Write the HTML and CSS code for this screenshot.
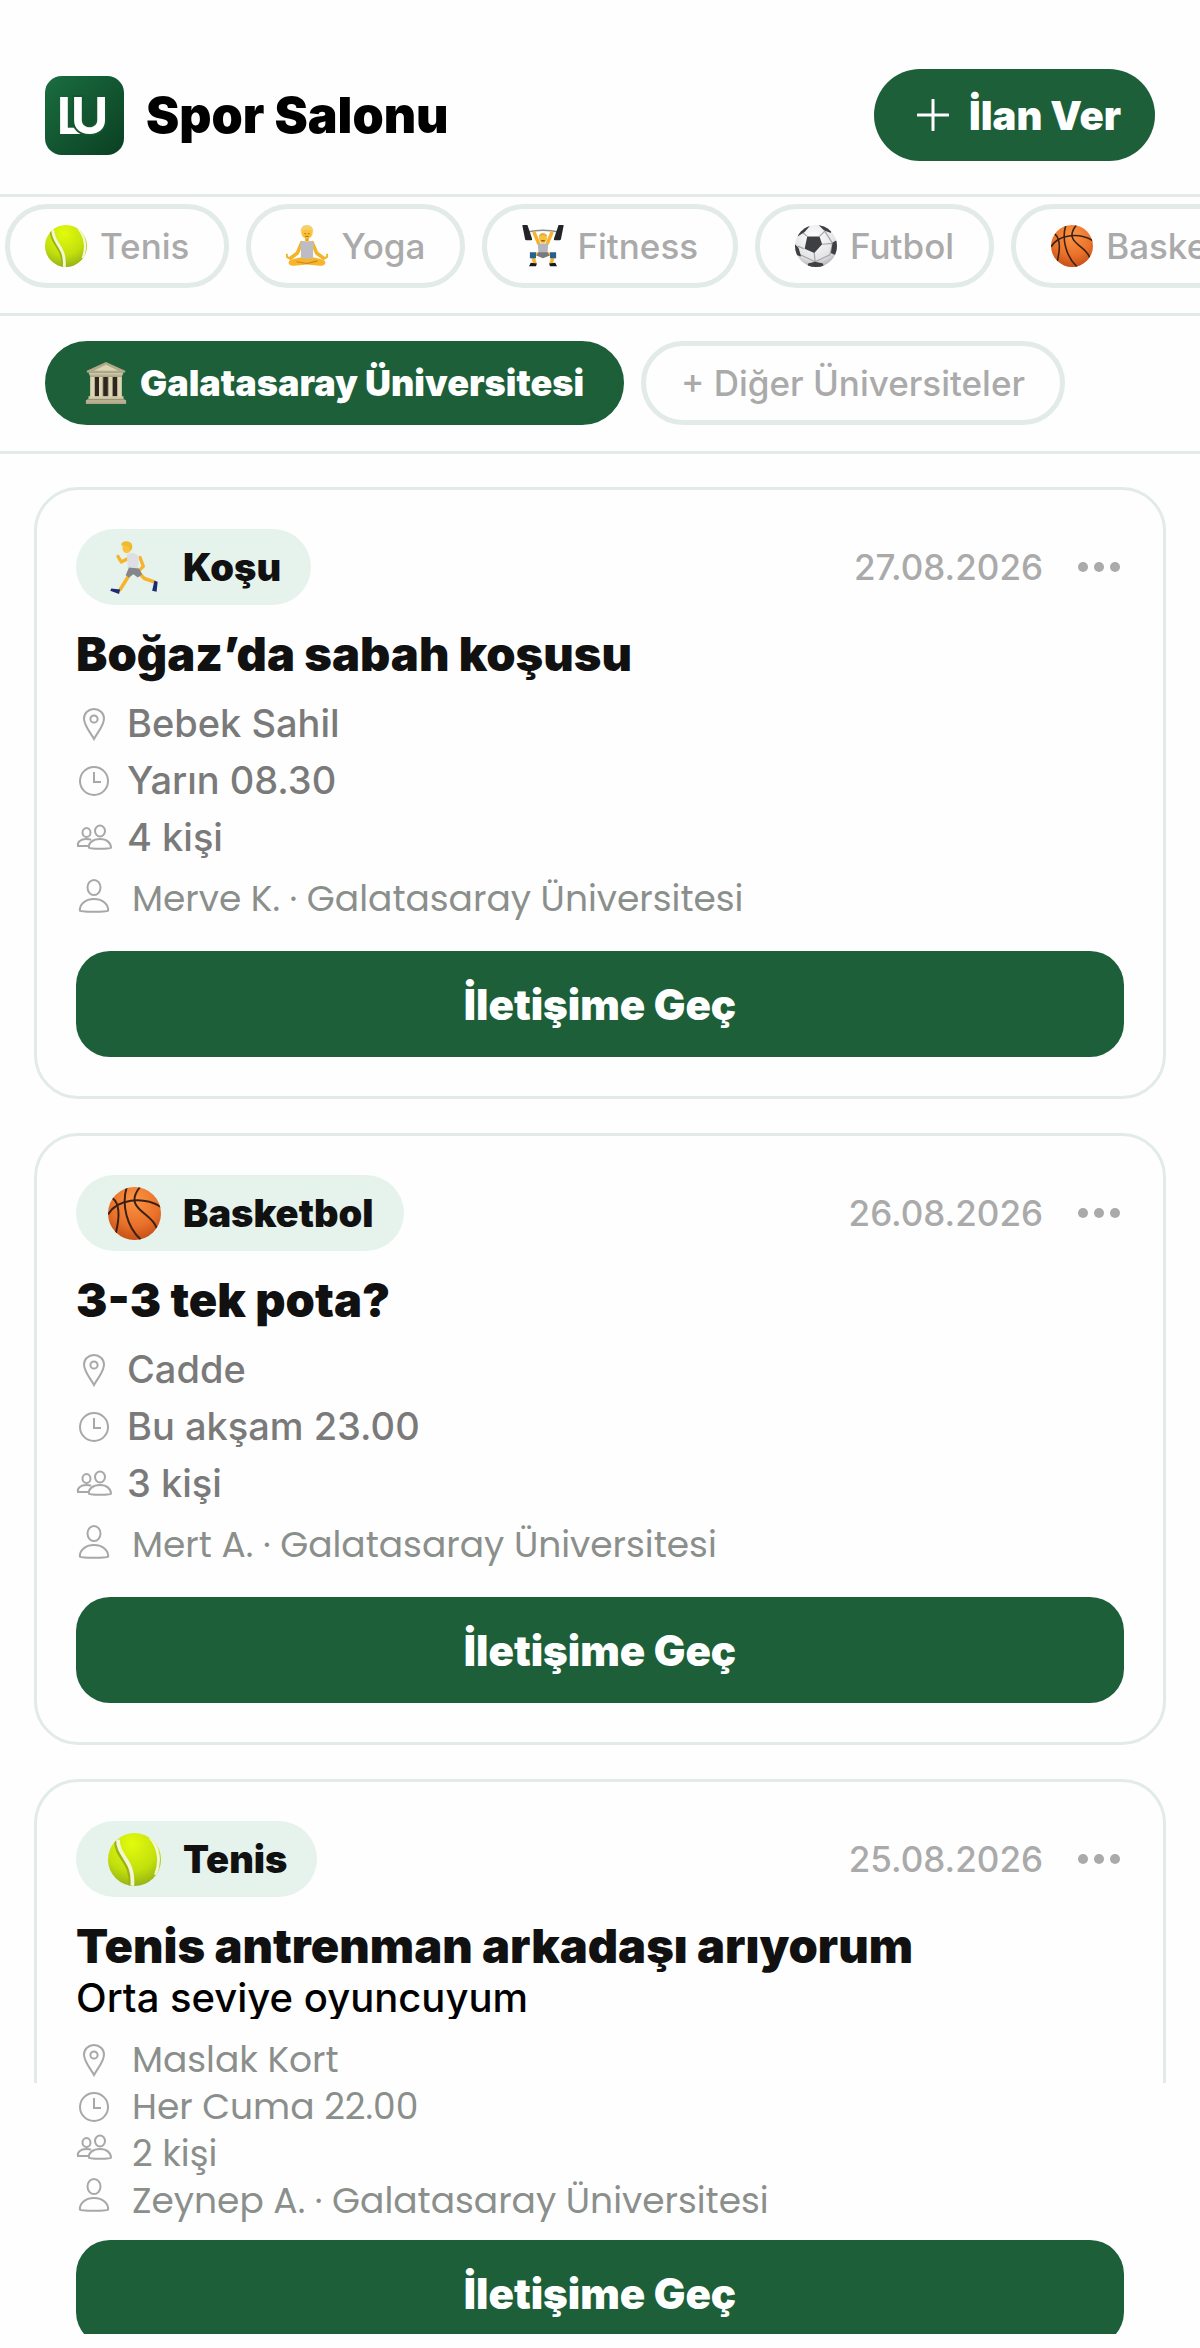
FILE: index.html
```html
<!DOCTYPE html>
<html lang="tr">
<head>
  <meta charset="UTF-8">
  <meta name="viewport" content="width=device-width, initial-scale=1">
  <title>Spor Salonu</title>
  <link rel="stylesheet" href="styles.css">
</head>
<body>

  <!-- shared icons -->
  <svg class="sprite" aria-hidden="true">
    <defs>
      <linearGradient id="logoFill" x1="0" y1="0" x2="1" y2="1">
        <stop offset="0" stop-color="#1a6e40"/>
        <stop offset="1" stop-color="#0b3f22"/>
      </linearGradient>
      <radialGradient id="tennisFill" cx="0.45" cy="0.2" r="0.85">
        <stop offset="0" stop-color="#e2fb0c"/>
        <stop offset="0.6" stop-color="#c3e00d"/>
        <stop offset="1" stop-color="#8fae14"/>
      </radialGradient>
      <radialGradient id="basketFill" cx="0.5" cy="0.25" r="0.8">
        <stop offset="0" stop-color="#fb9443"/>
        <stop offset="0.6" stop-color="#e9712a"/>
        <stop offset="1" stop-color="#bf4a14"/>
      </radialGradient>
      <radialGradient id="footFill" cx="0.45" cy="0.3" r="0.75">
        <stop offset="0" stop-color="#ffffff"/>
        <stop offset="0.7" stop-color="#e3e3e5"/>
        <stop offset="1" stop-color="#a9a9ad"/>
      </radialGradient>
      <linearGradient id="stoneFill" x1="0" y1="0" x2="0" y2="1">
        <stop offset="0" stop-color="#d8d1b0"/>
        <stop offset="1" stop-color="#aba384"/>
      </linearGradient>
      <clipPath id="ball"><circle cx="24" cy="24" r="24"/></clipPath>
    </defs>

    <symbol id="tennis" viewBox="0 0 48 48">
      <circle cx="24" cy="24" r="24" fill="url(#tennisFill)"/>
      <g clip-path="url(#ball)" fill="none">
        <path d="M8 7C8 23 23 25 21 48" stroke="#9ab014" stroke-width="5"/>
        <path d="M9 6C9 22 24 24 22 48" stroke="#f3f7d4" stroke-width="3.4"/>
        <path d="M38 4C46 13 48 26 43 38" stroke="#f3f7d4" stroke-width="2.6"/>
      </g>
    </symbol>

    <symbol id="basket" viewBox="0 0 48 48">
      <circle cx="24" cy="24" r="24" fill="url(#basketFill)"/>
      <g clip-path="url(#ball)" fill="none" stroke="#3a2015" stroke-width="1.8">
        <path d="M0 25C8 11 31 8 48 18"/>
        <path d="M17 0C12 16 17 36 30 48"/>
        <path d="M29 0C13 20 40 23 44 37"/>
        <path d="M4 10C12 16 10 30 7 42"/>
      </g>
    </symbol>

    <symbol id="football" viewBox="0 0 48 48">
      <circle cx="24" cy="24" r="24" fill="url(#footFill)"/>
      <g clip-path="url(#ball)">
        <path d="M14 13 8 8M28 13 34 7M31 22 43 21M22 32 23 42M10 27 3 24M34 7 43 21M43 21 40 34M40 34 23 42M23 42 6 34" stroke="#a5a5a8" stroke-width="1.4" fill="none"/>
        <path d="M14 13h14l3 9-9 10-11-5z" fill="#3e3f42"/>
        <path d="M4 3 17 1 11 8 3 13zM27 0h16l-2 9-8-3zM43 20l5-3v18l-7-3zM0 22l4 4 3 10-7-2zM15 44l8-2 9 2 1 5H14z" fill="#3e3f42"/>
      </g>
    </symbol>

    <symbol id="yoga" viewBox="0 0 48 48">
      <path d="M18 20 13 32 5 38M30 20l5 12 8 6" fill="none" stroke="#f4b429" stroke-width="4" stroke-linecap="round" stroke-linejoin="round"/>
      <path d="M4 38c-3-1-4-3-3-4M44 38c3-1 4-3 3-4" fill="none" stroke="#f4b429" stroke-width="2.500" stroke-linecap="round"/>
      <path d="M3 43c0-4 6-4 13-6h16c7 2 13 2 13 6s-7 4-12 3l-9-1-9 1c-5 1-12 1-12-3z" fill="#f6b52b"/>
      <path d="M12 42l12 2 12-3" fill="none" stroke="#cf8217" stroke-width="1.2"/>
      <path d="M16 20l5-2c1 2 5 2 6 0l5 2-1 8v9c-3 2-11 2-14 0v-9z" fill="#bcbcc2"/>
      <path d="M22 13h4v6h-4z" fill="#eaa51f"/>
      <circle cx="24" cy="9" r="6.500" fill="#fcc33a"/>
      <path d="M17 9c-1-5 2-9 7-9s8 4 7 9c-1-3-3-4-7-4s-6 1-7 4z" fill="#f5cf6d"/>
      <path d="M21 10h2M25 10h2M22 13h4" stroke="#9c5d13" stroke-width="1"/>
    </symbol>

    <symbol id="lifter" viewBox="0 0 48 48">
      <path d="M6 8Q24 4 42 8" fill="none" stroke="#8b8d92" stroke-width="1.500"/>
      <path d="M14 9 19 21M34 9l-5 12" stroke="#f6b42d" stroke-width="4" stroke-linecap="round"/>
      <path d="M2 1h3l5 15H5zM46 1h-3l-5 15h5z" fill="#222428" stroke="#222428" stroke-width="3" stroke-linejoin="round"/>
      <path d="M18 33 12 35l3 10M30 33l6 2-3 10" fill="none" stroke="#f6b42d" stroke-width="4"/>
      <path d="M9 31h7v7H9zM32 31h7v7h-7z" fill="#26608f"/>
      <path d="M18 21h12l-1 13H19z" fill="#b5b6bb"/>
      <path d="M18 31h12l1 4-7 3-7-3z" fill="#77797f"/>
      <ellipse cx="24" cy="15" rx="4.500" ry="6" fill="#fac03b"/>
      <path d="M19 14c0-6 10-6 10 0-3-3-7-3-10 0z" fill="#dfae45"/>
      <path d="M22 18h4" stroke="#87460e" stroke-width="1.400"/>
      <path d="M10 43l7 1-1 3H8zM38 43l-7 1 1 3h8z" fill="#17191e"/>
    </symbol>

    <symbol id="runner" viewBox="0 0 48 48">
      <path d="M20 15l-8 4-3-5M29 15l3 8-5 5" fill="none" stroke="#f6b42d" stroke-width="3" stroke-linecap="round" stroke-linejoin="round"/>
      <path d="M21 28l-5 8-5 8M27 28l6 6 9 3" fill="none" stroke="#f6b42d" stroke-width="3.200" stroke-linecap="round" stroke-linejoin="round"/>
      <path d="M17 12c4-2 9-1 11 2l-1 12-9-1z" fill="#dedfe4"/>
      <path d="M19 24l9 1 3 5-4 3-4-3-4 3-3-2z" fill="#85868c"/>
      <ellipse cx="17" cy="6" rx="4" ry="5" fill="#fbc139"/>
      <path d="M12 4c0-5 9-5 10 0 0 2 0 4-2 5 0-3-2-5-8-5z" fill="#edbb32"/>
      <path d="M3 43l8 1-1 4-8-3zM42 36l3 1-1 9-4-1z" fill="#1d2a76"/>
    </symbol>

    <symbol id="museum" viewBox="0 0 48 48">
      <path d="M6 15h36v25H6z" fill="#8f886c"/>
      <path d="M11 16h5v23h-5zM21 16h5v23h-5zM32 16h5v23h-5z" fill="#30261f"/>
      <path d="M6 15h5v25H6zM16 15h4v25h-4zM27 15h4v25h-4zM37 15h5v25h-5z" fill="#ddd6b5"/>
      <path d="M24 0 46 10v2H2v-2z" fill="#b1a98a"/>
      <path d="M24 3 38 10H10z" fill="#dcd5b4"/>
      <path d="M4 12h40l-2 5H6z" fill="url(#stoneFill)"/>
      <path d="M4 39h40v3l3 2v4H1v-4l3-2z" fill="url(#stoneFill)"/>
      <path d="M3 43h42" stroke="#8f886c" stroke-width="1"/>
    </symbol>

    <symbol id="pin" viewBox="0 0 36 36">
      <path d="M18 33C15 27 8 20 8 12.500a10 9.500 0 0 1 20 0C28 20 21 27 18 33z"/>
      <circle cx="18" cy="13" r="3.600"/>
    </symbol>
    <symbol id="clock" viewBox="0 0 36 36">
      <circle cx="18" cy="18" r="14"/>
      <path d="M18 9v10h7"/>
    </symbol>
    <symbol id="people" viewBox="0 0 36 36">
      <ellipse cx="10.500" cy="12.500" rx="4" ry="4.500"/>
      <ellipse cx="24" cy="11" rx="5" ry="5.500"/>
      <path d="M13 28c-1-5 4-9 11-9s11 4 11 9c0 1-22 1-22 0z"/>
      <path d="M12 26H2c-1-4 3-7 8-7 2 0 4 0 5 1"/>
    </symbol>
    <symbol id="person" viewBox="0 0 36 36">
      <ellipse cx="18" cy="9.500" rx="6.500" ry="7.500"/>
      <path d="M4 33c-1-6 5-12 14-12s15 6 14 12c0 1-28 1-28 0z"/>
    </symbol>
    <symbol id="dots" viewBox="0 0 44 12">
      <circle cx="6" cy="6" r="5"/>
      <circle cx="22" cy="6" r="5"/>
      <circle cx="38" cy="6" r="5"/>
    </symbol>
  </svg>

  <div class="app">

    <header class="header">
      <svg class="logo" viewBox="0 0 80 80" role="img" aria-label="LU">
        <rect width="80" height="80" rx="17" fill="url(#logoFill)"/>
        <text class="logo-text" x="12" y="59">L</text>
        <text class="logo-text front" x="26" y="59">U</text>
      </svg>
      <h1 class="app-title">Spor Salonu</h1>
      <button class="new-btn" type="button">
        <svg class="plus" viewBox="0 0 32 32"><path d="M16 1v30M1 16h30"/></svg>
        İlan Ver
      </button>
    </header>

    <nav class="sports">
      <button class="chip" type="button"><svg class="emoji"><use href="#tennis"/></svg>Tenis</button>
      <button class="chip" type="button"><svg class="emoji"><use href="#yoga"/></svg>Yoga</button>
      <button class="chip" type="button"><svg class="emoji"><use href="#lifter"/></svg>Fitness</button>
      <button class="chip" type="button"><svg class="emoji"><use href="#football"/></svg>Futbol</button>
      <button class="chip" type="button"><svg class="emoji"><use href="#basket"/></svg>Basketbol</button>
    </nav>

    <nav class="schools">
      <button class="chip active" type="button"><svg class="emoji"><use href="#museum"/></svg>Galatasaray Üniversitesi</button>
      <button class="chip" type="button">+ Diğer Üniversiteler</button>
    </nav>

    <main class="list">

      <article class="card">
        <div class="card-head">
          <span class="tag"><svg class="tag-emoji"><use href="#runner"/></svg>Koşu</span>
          <time class="date" datetime="2026-08-27">27.08.2026</time>
          <button class="more" type="button" aria-label="Seçenekler"><svg><use href="#dots"/></svg></button>
        </div>
        <h2 class="card-title">Boğaz’da sabah koşusu</h2>
        <ul class="meta">
          <li><svg class="icon"><use href="#pin"/></svg>Bebek Sahil</li>
          <li><svg class="icon"><use href="#clock"/></svg>Yarın 08.30</li>
          <li><svg class="icon"><use href="#people"/></svg>4 kişi</li>
          <li class="owner"><svg class="icon"><use href="#person"/></svg>Merve K. · Galatasaray Üniversitesi</li>
        </ul>
        <button class="contact-btn" type="button">İletişime Geç</button>
      </article>

      <article class="card">
        <div class="card-head">
          <span class="tag"><svg class="tag-emoji"><use href="#basket"/></svg>Basketbol</span>
          <time class="date" datetime="2026-08-26">26.08.2026</time>
          <button class="more" type="button" aria-label="Seçenekler"><svg><use href="#dots"/></svg></button>
        </div>
        <h2 class="card-title">3-3 tek pota?</h2>
        <ul class="meta">
          <li><svg class="icon"><use href="#pin"/></svg>Cadde</li>
          <li><svg class="icon"><use href="#clock"/></svg>Bu akşam 23.00</li>
          <li><svg class="icon"><use href="#people"/></svg>3 kişi</li>
          <li class="owner"><svg class="icon"><use href="#person"/></svg>Mert A. · Galatasaray Üniversitesi</li>
        </ul>
        <button class="contact-btn" type="button">İletişime Geç</button>
      </article>

      <article>
        <div class="card card-open">
          <div class="card-head">
            <span class="tag"><svg class="tag-emoji"><use href="#tennis"/></svg>Tenis</span>
            <time class="date" datetime="2026-08-25">25.08.2026</time>
            <button class="more" type="button" aria-label="Seçenekler"><svg><use href="#dots"/></svg></button>
          </div>
          <h2 class="card-title">Tenis antrenman arkadaşı arıyorum</h2>
          <p class="note">Orta seviye oyuncuyum</p>
          <ul class="meta compact">
            <li><svg class="icon"><use href="#pin"/></svg>Maslak Kort</li>
          </ul>
        </div>
        <div class="card-rest">
          <ul class="meta compact">
            <li><svg class="icon"><use href="#clock"/></svg>Her Cuma 22.00</li>
            <li><svg class="icon raised"><use href="#people"/></svg>2 kişi</li>
            <li><svg class="icon raised"><use href="#person"/></svg>Zeynep A. · Galatasaray Üniversitesi</li>
          </ul>
          <button class="contact-btn" type="button">İletişime Geç</button>
        </div>
      </article>

    </main>
  </div>

</body>
</html>
```
FILE: styles.css
```css
* {
  box-sizing: border-box;
}

body {
  margin: 0;
  background-color: #fefefe;
  font-family: Inter, "Noto Sans", sans-serif;
  color: #111;
}

button {
  border: none;
  background: none;
  padding: 0;
  font-family: inherit;
  cursor: pointer;
  white-space: nowrap;
}

h1, h2, p, ul {
  margin: 0;
  padding: 0;
}

svg {
  flex-shrink: 0;
}

.sprite {
  position: absolute;
  width: 0;
  height: 0;
}

.app {
  height: calc(100vh - 14px);
  overflow: hidden;
}

/* header */
.header {
  display: flex;
  align-items: center;
  padding: 69px 45px 33px;
  border-bottom: 3px solid #e2ebe7;
}

.logo {
  width: 79px;
  height: 79px;
}

.logo-text {
  font-size: 52px;
  font-weight: 700;
  fill: white;
}

.logo-text.front {
  stroke: #14572f;
  stroke-width: 4px;
  paint-order: stroke;
}

.app-title {
  margin-left: 22px;
  font-size: 50px;
  font-weight: 900;
  line-height: 60px;
  color: black;
}

.new-btn {
  display: flex;
  align-items: center;
  gap: 20px;
  height: 92px;
  margin-left: auto;
  padding: 0 34px 0 43px;
  border-radius: 46px;
  background-color: #1c5f39;
  color: white;
  font-size: 40px;
  font-weight: 900;
}

.plus {
  width: 32px;
  height: 32px;
  fill: none;
  stroke: white;
  stroke-width: 3px;
  stroke-linecap: round;
}

/* filters */
.sports,
.schools {
  display: flex;
  gap: 17px;
  border-bottom: 3px solid #e2ebe7;
  overflow: hidden;
}

.sports {
  padding: 7px 0 25px 5px;
}

.schools {
  padding: 25px 45px 26px;
}

.chip {
  display: flex;
  align-items: center;
  flex-shrink: 0;
  gap: 13px;
  height: 84px;
  padding: 0 35px;
  border: 5px solid #e2ebe7;
  border-radius: 42px;
  color: #aaa;
  font-size: 35px;
  font-weight: 500;
}

.chip.active {
  border-color: #1c5f39;
  background-color: #1c5f39;
  color: white;
  font-size: 36px;
  font-weight: 900;
}

.emoji {
  width: 42px;
  height: 42px;
}

/* cards */
.list {
  display: flex;
  flex-direction: column;
  gap: 34px;
  padding: 33px 34px 0;
}

.card {
  padding: 39px;
  border: 3px solid #e2ebe7;
  border-radius: 44px;
}

.card-open {
  padding-bottom: 0;
  border-bottom: none;
  border-radius: 44px 44px 0 0;
}

.card-rest {
  padding: 0 42px;
}

.card-head {
  display: flex;
  align-items: center;
}

.tag {
  display: flex;
  align-items: center;
  gap: 22px;
  height: 76px;
  padding: 0 30px 0 32px;
  border-radius: 38px;
  background-color: #e6f3ec;
  font-size: 38px;
  font-weight: 900;
}

.tag-emoji {
  width: 53px;
  height: 53px;
}

.date {
  margin-left: auto;
  color: #aaa;
  font-size: 35px;
  font-weight: 500;
}

.more {
  width: 44px;
  height: 44px;
  margin-left: 34px;
  margin-right: 3px;
}

.more svg {
  display: block;
  width: 44px;
  height: 12px;
  fill: #aaa;
}

.card-title {
  margin: 22px 0 14px;
  font-size: 47px;
  font-weight: 900;
  line-height: 54px;
}

.note {
  margin-top: -10px;
  margin-bottom: 17px;
  color: black;
  font-size: 40px;
  font-weight: 500;
  line-height: 42px;
  overflow: hidden;
}

.meta {
  list-style: none;
  color: #7a7a7a;
  font-size: 38px;
  font-weight: 500;
}

.meta li {
  display: flex;
  align-items: center;
  gap: 15px;
  line-height: 57px;
}

.icon {
  width: 36px;
  height: 36px;
  fill: none;
  stroke: #a8a8a8;
  stroke-width: 2px;
}

.meta .owner {
  gap: 20px;
  padding-top: 4px;
}

.owner .icon {
  margin-bottom: 6px;
}

/* round single-storey a */
.meta .owner,
.meta.compact {
  color: #8b8f8c;
  font-family: Poppins, Inter, sans-serif;
  font-size: 36px;
  font-weight: 400;
  font-feature-settings: "cv11";
}

.meta.compact li {
  gap: 20px;
  line-height: 47px;
}

.icon.raised {
  align-self: flex-start;
}

.contact-btn {
  display: block;
  width: 100%;
  height: 106px;
  margin-top: 24px;
  border-radius: 34px;
  background-color: #1c5f39;
  color: white;
  font-size: 42px;
  font-weight: 900;
}

.card-rest .contact-btn {
  margin-top: 16px;
}
```
